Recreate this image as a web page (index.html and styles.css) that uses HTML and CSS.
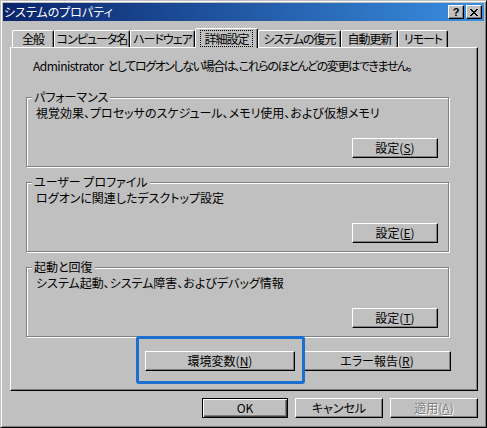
FILE: index.html
```html
<!DOCTYPE html>
<html lang='ja'>
<head>
    <meta charset='UTF-8'>
    <title>システムのプロパティ</title>
    <link rel="stylesheet" href="styles.css">
</head>
<body>

<div class='window'>
    <div class='titlebar'>
        <span class='title'>システムのプロパティ</span>
        <div class='caption-buttons'>
            <span class='cap-btn cap-help'>?</span>
            <span class='cap-btn'>
                <svg width='8' height='7' viewBox='0 0 8 7' shape-rendering='crispEdges'>
                    <path d='M0 0h2v1h1v1h2v-1h1v-1h2v1h-1v1h-1v1h-1v1h1v1h1v1h1v1h-2v-1h-1v-1h-2v1h-1v1h-2v-1h1v-1h1v-1h1v-1h-1v-1h-1v-1h-1z' fill='#000'/>
                </svg>
            </span>
        </div>
    </div>

    <div class='tabs'>
        <div class='tab tab-general'>全般</div>
        <div class='tab tab-computer'>コンピュータ名</div>
        <div class='tab tab-hardware'>ハードウェア</div>
        <div class='tab tab-advanced active'><span class='focus'>詳細設定</span></div>
        <div class='tab tab-restore'>システムの復元</div>
        <div class='tab tab-update'>自動更新</div>
        <div class='tab tab-remote'>リモート</div>
    </div>

    <div class='panel'>
        <p class='note'><span class='latin'>Administrator</span> としてログオンしない場合は、これらのほとんどの変更はできません。</p>

        <fieldset class='group'>
            <legend>パフォーマンス</legend>
            <p class='desc'>視覚効果、プロセッサのスケジュール、メモリ使用、および仮想メモリ</p>
            <button class='btn btn-set'>設定(<u>S</u>)</button>
        </fieldset>

        <fieldset class='group'>
            <legend>ユーザー プロファイル</legend>
            <p class='desc'>ログオンに関連したデスクトップ設定</p>
            <button class='btn btn-set'>設定(<u>E</u>)</button>
        </fieldset>

        <fieldset class='group group-last'>
            <legend>起動と回復</legend>
            <p class='desc'>システム起動、システム障害、およびデバッグ情報</p>
            <button class='btn btn-set'>設定(<u>T</u>)</button>
        </fieldset>

        <div class='panel-actions'>
            <div class='marked'>
                <button class='btn btn-env'>環境変数(<u>N</u>)</button>
                <span class='marker'></span>
            </div>
            <button class='btn btn-error'>エラー報告(<u>R</u>)</button>
        </div>
    </div>

    <div class='footer'>
        <button class='btn btn-default'>OK</button>
        <button class='btn btn-wide'>キャンセル</button>
        <button class='btn btn-wide btn-disabled'>適用(<u>A</u>)</button>
    </div>
</div>

</body>
</html>
```

FILE: styles.css
```css
body {
    margin: 0;
    background: #c0c0c0;
}

.window {
    width: 487px;
    height: 428px;
    box-sizing: border-box;
    background: #c0c0c0;
    border: 1px solid;
    border-color: #c0c0c0 #000 #000 #c0c0c0;
    box-shadow: inset 1px 1px #fff, inset -1px -1px #808080;
    padding: 2px;
    font-family: "Noto Sans CJK JP", sans-serif;
    font-size: 12px;
    font-feature-settings: "palt";
    color: #000;
}

/* title bar */
.titlebar {
    height: 18px;
    display: flex;
    align-items: center;
    justify-content: space-between;
    padding: 0 2px 0 1px;
    background: linear-gradient(to right, #0a246a, #3a8ee0);
    color: #fff;
}

.title {
    line-height: 14px;
}

.caption-buttons {
    display: flex;
    gap: 2px;
}

.cap-btn {
    width: 16px;
    height: 14px;
    box-sizing: border-box;
    display: flex;
    align-items: center;
    justify-content: center;
    background: #c0c0c0;
    border: 1px solid;
    border-color: #fff #000 #000 #fff;
    box-shadow: inset -1px -1px #808080;
}

.cap-help {
    font-family: "Liberation Sans", sans-serif;
    font-weight: bold;
    font-size: 11px;
    line-height: 11px;
    color: #000;
}

/* tabs */
.tabs {
    display: flex;
    align-items: flex-end;
    height: 19px;
    margin: 7px 0 0 9px;
}

.tab {
    height: 17px;
    box-sizing: border-box;
    display: flex;
    align-items: center;
    justify-content: center;
    border: 1px solid;
    border-bottom: none;
    border-color: #fff #000 transparent #fff;
    border-radius: 2px 2px 0 0;
    box-shadow: inset -1px 0 #808080;
    line-height: 14px;
    white-space: nowrap;
    letter-spacing: -1px;
}

.tab.active {
    height: 20px;
    margin-bottom: -1px;
    position: relative;
    z-index: 1;
    background: #c0c0c0;
}

.focus {
    outline: 1px dotted #000;
    padding: 1px 3px 0;
}

.tab-general { width: 42px; }
.tab-computer { width: 76px; }
.tab-hardware { width: 65px; }
.tab-advanced { width: 63px; }
.tab-restore { width: 83px; }
.tab-update { width: 57px; }
.tab-remote { width: 50px; }

/* panel */
.panel {
    width: 468px;
    height: 344px;
    box-sizing: border-box;
    margin-left: 7px;
    padding: 11px 0 0 15px;
    border: 1px solid;
    border-color: #fff #000 #000 #fff;
    box-shadow: inset -1px -1px #808080;
}

.note {
    margin: 0 0 17px 7px;
    line-height: 14px;
    white-space: nowrap;
    letter-spacing: -1.4px;
    word-spacing: 3px;
}

.note .latin {
    letter-spacing: -0.5px;
}

.group {
    width: 423px;
    height: 77px;
    box-sizing: border-box;
    min-width: 0;
    margin: 0 0 8px;
    padding: 0 10px 8px 0;
    border: 1px solid #808080;
    box-shadow: 1px 1px #fff, inset 1px 1px #fff;
    display: flex;
    flex-direction: column;
}

.group-last {
    margin-bottom: 0;
}

.group legend {
    margin-left: 5px;
    padding: 0 2px;
    line-height: 14px;
    background: #c0c0c0;
}

.desc {
    margin: 2px 0 0 9px;
    line-height: 14px;
    white-space: nowrap;
}

.group .btn {
    margin-top: auto;
    align-self: flex-end;
}

/* buttons */
.btn {
    height: 20px;
    width: 86px;
    box-sizing: border-box;
    padding: 0;
    font: inherit;
    line-height: 14px;
    color: #000;
    background: #c0c0c0;
    border: 1px solid;
    border-color: #fff #000 #000 #fff;
    box-shadow: inset -1px -1px #808080;
}

.btn-wide {
    width: 88px;
}

.btn-default {
    border-color: #000;
    box-shadow: inset 1px 1px #fff, inset -1px -1px #404040, inset -2px -2px #808080;
}

.btn-disabled {
    color: #808080;
    text-shadow: 1px 1px #fff;
}

.panel-actions {
    display: flex;
    gap: 8px;
    margin: 14px 0 0 119px;
}

.btn-env {
    width: 150px;
}

.btn-error {
    width: 148px;
}

.marked {
    position: relative;
    display: flex;
}

/* blue annotation box drawn over the button */
.marker {
    position: absolute;
    top: -15px;
    left: -9px;
    right: -10px;
    bottom: -13px;
    border: 3px solid #1c6fcc;
    border-radius: 3px;
}

.footer {
    display: flex;
    justify-content: flex-end;
    gap: 7px;
    margin-top: 7px;
    padding-right: 6px;
}
```
